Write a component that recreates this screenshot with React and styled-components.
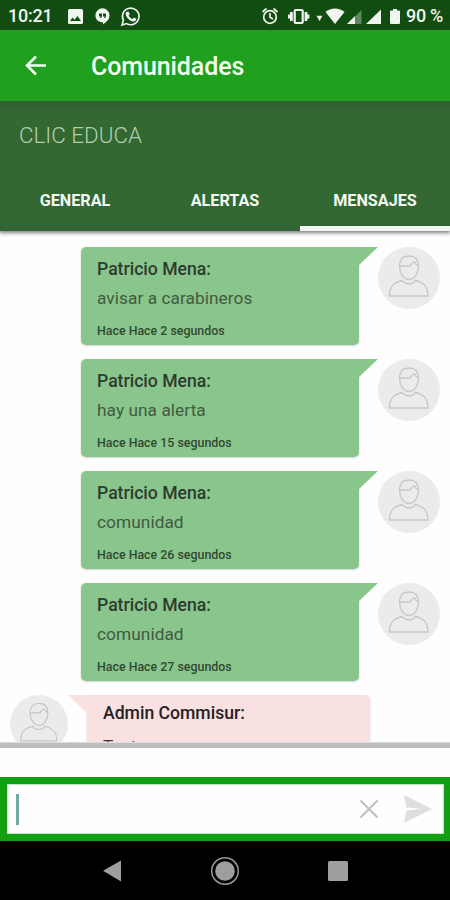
import React from "react";
import styled, { createGlobalStyle } from "styled-components";

const GlobalStyle = createGlobalStyle`
  * { box-sizing: border-box; }
  body { margin: 0; background: #fff; font-family: Roboto, "Liberation Sans", sans-serif; }
`;

const Screen = styled.div`
  width: 450px;
  height: 900px;
  display: flex;
  flex-direction: column;
  overflow: hidden;
  background: #fefefe;
`;

const Text = styled.span`
  display: block;
  white-space: nowrap;
`;

const StatusBar = styled.header`
  height: 30px;
  flex: none;
  display: flex;
  align-items: center;
  justify-content: space-between;
  padding: 1px 7px 0 8px;
  background: #114d10;
  color: #f0f5ef;
  svg { display: block; }
`;

const StatusGroup = styled.div`
  display: flex;
  align-items: center;
`;

const Clock = styled(Text)`
  width: 59px;
  font-size: 18px;
  letter-spacing: -0.25px;
  font-weight: 500;
  line-height: 30px;
`;

const Battery = styled(Text)`
  width: 37px;
  margin-left: 5px;
  font-size: 18px;
  letter-spacing: -0.3px;
  font-weight: 500;
  line-height: 30px;
`;

const AppBar = styled.div`
  height: 71px;
  flex: none;
  display: flex;
  align-items: center;
  padding-left: 25px;
  background: #1fa01f;
  color: #f3fff2;
  z-index: 2;
`;

const Title = styled.h1`
  margin: 2px 0 0 44px;
  font-size: 25px;
  letter-spacing: -0.1px;
  font-weight: 500;
  line-height: 32px;
  white-space: nowrap;
`;

const Community = styled.section`
  height: 130px;
  flex: none;
  display: flex;
  flex-direction: column;
  background: linear-gradient(#305e30 0, #336833 14px, #336833 120px, #326232 100%);
  box-shadow: 0 1px 4px 1px rgba(0, 0, 0, 0.5);
  z-index: 1;
`;

const CommunityName = styled.h2`
  height: 69px;
  margin: 0;
  padding-left: 19px;
  font-size: 22.4px;
  font-weight: 300;
  line-height: 69px;
  color: #b1ceae;
`;

const Tabs = styled.nav`
  flex: 1;
  display: grid;
  grid-template-columns: repeat(3, 1fr);
`;

const Tab = styled.button`
  border: 0;
  border-bottom: 5px solid ${(p) => (p.$active ? "#f2f5f1" : "transparent")};
  padding: 7px 0 1px;
  background: none;
  font: 700 16.2px/48px Roboto, sans-serif;
  color: #f3f8f2;
`;

const Messages = styled.main`
  height: 512px;
  flex: none;
  display: flex;
  flex-direction: column;
  gap: 14px;
  padding-top: 16px;
  overflow: hidden;
`;

const Row = styled.article`
  flex: none;
  display: flex;
  align-items: flex-start;
  padding: ${(p) => (p.$own ? "0 10px 0 81px" : "0 0 0 10px")};
`;

const Bubble = styled.div`
  width: ${(p) => (p.$own ? 278 : 283)}px;
  height: 98px;
  padding: ${(p) => (p.$own ? "11px 16px" : "7px 16px")};
  border-radius: ${(p) => (p.$own ? "5px 0 5px 5px" : "0 5px 5px 5px")};
  background: ${(p) => (p.$own ? "#8ac68b" : "#f9e0e1")};
  color: ${(p) => (p.$own ? "#2d3c2f" : "#262022")};
  box-shadow: 0 1px 2px rgba(60, 90, 60, 0.25);
`;

const Tail = styled.div`
  width: ${(p) => (p.$own ? 19 : 19)}px;
  height: 18px;
  background: ${(p) => (p.$own ? "#8ac68b" : "#f9e0e1")};
  clip-path: ${(p) => (p.$own ? "polygon(0 0, 100% 0, 0 100%)" : "polygon(0 0, 100% 0, 100% 100%)")};
`;

const Author = styled(Text)`
  font-size: 17.6px;
  font-weight: 500;
  line-height: 22px;
`;

const Body = styled(Text)`
  margin-top: ${(p) => (p.$own ? 7 : 11)}px;
  font-size: 17.3px;
  letter-spacing: 0.05px;
  line-height: 22px;
  color: ${(p) => (p.$own ? "#3f5b41" : "#3c3334")};
`;

const Time = styled(Text)`
  margin-top: 14px;
  font-size: 12.4px;
  font-weight: 500;
  line-height: 16px;
  color: #304a33;
`;

const Avatar = styled.div`
  width: ${(p) => p.$size}px;
  height: ${(p) => p.$size}px;
  border-radius: 50%;
  background: #ebebeb;
  svg { display: block; width: 100%; height: 100%; }
`;

const Composer = styled.footer`
  height: 98px;
  flex: none;
  display: flex;
  flex-direction: column;
  justify-content: flex-end;
  border-top: 5px solid #bdbdbd;
  box-shadow: 0 -1px 1px #dedede;
  background: #fefefe;
  z-index: 1;
`;

const Field = styled.div`
  height: 64px;
  display: flex;
  align-items: center;
  border: solid #12a012;
  border-width: 7px 6px 7px 7px;
  padding: 0 10px 0 9px;
  background: #fefefe;
  box-shadow: inset 0 0 1px 1px #bde3bc;
`;

const Caret = styled.div`
  width: 3px;
  height: 31px;
  margin-right: auto;
  background: #70aba3;
`;

const Send = styled.div`
  display: flex;
  margin-left: 24px;
`;

const NavBar = styled.nav`
  height: 59px;
  flex: none;
  display: flex;
  justify-content: center;
  align-items: center;
  gap: 87px;
  background: #000;
`;

const messages = [
  { own: true, author: "Patricio Mena:", body: "avisar a carabineros", time: "Hace Hace 2 segundos" },
  { own: true, author: "Patricio Mena:", body: "hay una alerta", time: "Hace Hace 15 segundos" },
  { own: true, author: "Patricio Mena:", body: "comunidad", time: "Hace Hace 26 segundos" },
  { own: true, author: "Patricio Mena:", body: "comunidad", time: "Hace Hace 27 segundos" },
  { own: false, author: "Admin Commisur:", body: "Test", time: "" },
];

function Person({ size }) {
  return (
    <Avatar $size={size}>
      <svg viewBox="0 0 62 62" fill="none" stroke="#c6c6c6" strokeWidth="1.3" strokeLinejoin="round">
        <path d="M21.500 19c0-6.500 3.500-10 9.500-10s9.500 3.500 9.500 10c0 7-4 13.500-9.500 13.500S21.500 26 21.500 19Z" />
        <path d="M21.500 19h9.500c3-.2 3-4.500 5.500-4 1 2 2 3 4 3.500" />
        <path d="M24.500 33.500C16 35 11.500 39 11.500 49H50c0-10-4.500-14-13-15.500-2 4.500-10 4.500-12.500 0Z" />
      </svg>
    </Avatar>
  );
}

function Message({ own, author, body, time }) {
  const bubble = (
    <Bubble $own={own}>
      <Author>{author}</Author>
      <Body $own={own}>{body}</Body>
      {time && <Time>{time}</Time>}
    </Bubble>
  );
  return (
    <Row $own={own}>
      {own ? bubble : <Person size={58} />}
      <Tail $own={own} />
      {own ? <Person size={62} /> : bubble}
    </Row>
  );
}

export default function App() {
  return (
    <Screen>
      <GlobalStyle />
      <StatusBar>
        <StatusGroup>
          <Clock>10:21</Clock>
          <svg width="75" height="22" viewBox="67 4 75 22" fill="currentColor">
            <path fillRule="evenodd" d="M69.500 8h12A1.500 1.500 0 0 1 83 9.500v12a1.500 1.500 0 0 1-1.500 1.500h-12a1.500 1.500 0 0 1-1.500-1.500v-12A1.500 1.500 0 0 1 69.500 8Zm.5 12h11l-3.500-5-3 3.700-2-2.200Z" />
            <path fillRule="evenodd" d="M102.500 7.200a7.300 7.300 0 0 1 7 7.300c0 4-3 6.500-6.500 9v-2.200c-4.300 0-7.600-2.700-7.600-6.800a7.200 7.200 0 0 1 7.100-7.300ZM99 12.500v3h1.700l-.7 1.500h1.200l.8-1.700v-2.800Zm4 0v3h1.700l-.7 1.500h1.200l.8-1.700v-2.800Z" />
            <path d="m122 24 1.400-4.700a8.300 8.300 0 1 1 3.200 3.300Z" fill="none" stroke="currentColor" strokeWidth="1.600" />
            <path d="M127 10.700h1.700l1 2.500-1 1.400c1 1.800 2 2.800 3.900 3.500l1.300-1.500 2.400 1.200c0 1.700-1.300 2.600-2.800 2.600-3.700-.5-7.200-3.600-7.900-7.500.1-1.100.6-1.800 1.400-2.200Z" />
          </svg>
        </StatusGroup>
        <StatusGroup>
          <svg width="140" height="22" viewBox="261 4 140 22" fill="currentColor">
            <g fill="none" stroke="currentColor" strokeWidth="1.700">
              <circle cx="270" cy="16" r="6.300" />
              <path d="m262.500 11 4-3.500m11 3.500-4-3.500M270 12v4.200l3 1.800" />
            </g>
            <rect x="294.700" y="9" width="8" height="13" rx="1" fill="none" stroke="currentColor" strokeWidth="2.200" />
            <path d="M290 11h2.800v9H290ZM288 13.500h2.500v4H288ZM304.600 11h2.800v9h-2.800ZM307 13.500h2.400v4H307ZM316.500 14.700h6L319.500 20Z" />
            <path d="M325.500 11c5-4.700 14-4.700 19 0L335 23Z" />
            <path d="M361.500 9v14h-14Z" opacity=".35" />
            <path d="M355 15v8h-8ZM381 8.500V23h-15ZM393 8h4v1.500h2a1 1 0 0 1 1 1V22a1 1 0 0 1-1 1h-8a1 1 0 0 1-1-1V10.500a1 1 0 0 1 1-1h2Z" />
          </svg>
          <Battery>90 %</Battery>
        </StatusGroup>
      </StatusBar>
      <AppBar>
        <svg width="22" height="22" viewBox="0 0 22 22" fill="none" stroke="currentColor" strokeWidth="2.600">
          <path d="m11 1.500-9 9 9 9M2 10.500h19" />
        </svg>
        <Title>Comunidades</Title>
      </AppBar>
      <Community>
        <CommunityName>CLIC EDUCA</CommunityName>
        <Tabs>
          <Tab>GENERAL</Tab>
          <Tab>ALERTAS</Tab>
          <Tab $active>MENSAJES</Tab>
        </Tabs>
      </Community>
      <Messages>
        {messages.map((m, i) => <Message key={i} {...m} />)}
      </Messages>
      <Composer>
        <Field>
          <Caret />
          <svg width="20" height="20" viewBox="0 0 20 20" fill="none" stroke="#bcbcbc" strokeWidth="1.800">
            <path d="m1.500 1.500 17 17m0-17-17 17" />
          </svg>
          <Send>
            <svg width="31" height="30" viewBox="0 0 31 30" fill="#dedede">
              <path d="m1 1 28 14L1 29l2.500-12.500L20 15 3.500 13.500Z" />
            </svg>
          </Send>
        </Field>
      </Composer>
      <NavBar>
        <svg width="22" height="24" viewBox="0 0 22 24"><path d="M2 11.800 20 1.500v21Z" fill="#9e9e9e" /></svg>
        <svg width="30" height="30" viewBox="0 0 30 30">
          <circle cx="15" cy="15" r="13.300" fill="none" stroke="#999" strokeWidth="1.500" />
          <circle cx="15" cy="15" r="9.800" fill="#9e9e9e" />
        </svg>
        <svg width="22" height="22" viewBox="0 0 22 22"><rect x="1" y="1" width="20" height="20" rx="1.500" fill="#9e9e9e" /></svg>
      </NavBar>
    </Screen>
  );
}
